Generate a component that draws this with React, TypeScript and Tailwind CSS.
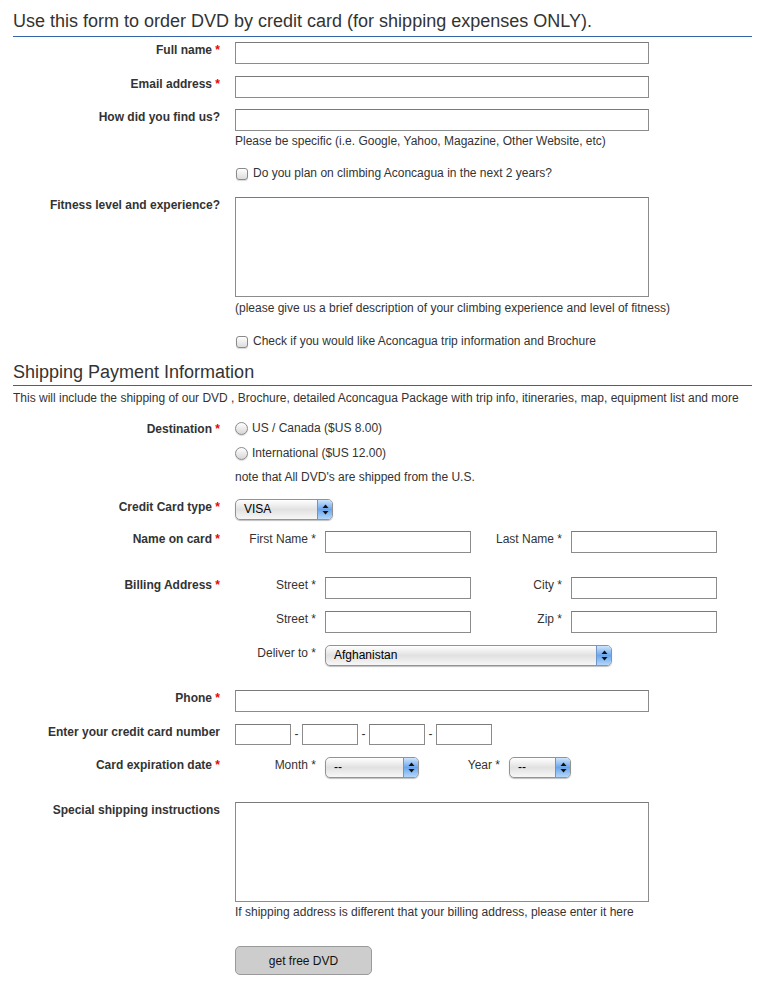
import React from "react";

const font = { fontFamily: '"Liberation Sans", Arial, Helvetica, sans-serif' };

function Req() {
  return <span className="text-[#e00] font-bold"> *</span>;
}

function Row({
  label,
  req,
  className,
  children,
}: {
  label: string;
  req?: boolean;
  className?: string;
  children?: React.ReactNode;
}) {
  return (
    <div className={"flex " + (className ?? "")}>
      <div className="w-[207px] shrink-0 text-right font-bold leading-[15px] pt-[1px] text-[#333]">
        {label}
        {req && <Req />}
      </div>
      <div className="ml-[15px] flex-1">{children}</div>
    </div>
  );
}

function TextInput({ className }: { className: string }) {
  return <div className={"border border-[#8c8c8c] border-t-[#7a7a7a] bg-white " + className} />;
}

function Arrows() {
  return (
    <svg width="7" height="11" viewBox="0 0 7 11">
      <path d="M3.5 0.5 L6.5 4 L0.5 4 Z" fill="#111" />
      <path d="M3.5 10.5 L6.5 7 L0.5 7 Z" fill="#111" />
    </svg>
  );
}

function AquaSelect({ value, className }: { value: string; className: string }) {
  return (
    <div
      className={
        "flex rounded-[5px] border border-[#939393] overflow-hidden shadow-[0_1px_1px_rgba(0,0,0,0.25)] bg-linear-to-b from-white via-[#e1e1e1] to-[#f7f7f7] " +
        className
      }
    >
      <span className="flex-1 pl-[8px] text-[12px] leading-[19px] text-black">{value}</span>
      <span className="w-[15px] flex items-center justify-center border-l border-[#6f94c9] bg-linear-to-b from-[#cfe5fb] via-[#6aa6ec] to-[#b3d6fa]">
        <Arrows />
      </span>
    </div>
  );
}

function Checkbox() {
  return (
    <span className="inline-block w-[12px] h-[12px] rounded-[3px] border border-[#8a8a8a] bg-linear-to-b from-white to-[#dcdcdc] shadow-[0_1px_1px_rgba(0,0,0,0.15)] mr-[5px] ml-[1px] shrink-0" />
  );
}

function Radio() {
  return (
    <span className="inline-block w-[13px] h-[13px] rounded-full border border-[#8a8a8a] bg-linear-to-b from-white to-[#d6d6d6] shadow-[0_1px_1px_rgba(0,0,0,0.15)] mr-[4px] shrink-0" />
  );
}

function SubLabel({ text, className }: { text: string; className: string }) {
  return <div className={"shrink-0 text-right leading-[15px] text-[#333] " + className}>{text} *</div>;
}

export default function App() {
  return (
    <div className="w-[765px] min-h-[995px] bg-white px-[13px] text-[12px] text-[#333]" style={font}>
      <h1 className="pt-[9px] pb-[3px] text-[18px] leading-[24px] font-normal text-[#333] border-b border-[#3564a8]">
        Use this form to order DVD by credit card (for shipping expenses ONLY).
      </h1>

      <Row label="Full name" req className="mt-[5px]">
        <TextInput className="w-[414px] h-[22px]" />
      </Row>
      <Row label="Email address" req className="mt-[12px]">
        <TextInput className="w-[414px] h-[22px]" />
      </Row>
      <Row label="How did you find us?" className="mt-[11px]">
        <TextInput className="w-[414px] h-[22px]" />
        <div className="mt-[3px] leading-[15px]">
          Please be specific (i.e. Google, Yahoo, Magazine, Other Website, etc)
        </div>
        <div className="mt-[17px] flex items-center leading-[15px]">
          <Checkbox />
          <span>Do you plan on climbing Aconcagua in the next 2 years?</span>
        </div>
      </Row>
      <Row label="Fitness level and experience?" className="mt-[16px]">
        <TextInput className="w-[414px] h-[100px]" />
        <div className="mt-[4px] leading-[15px]">
          (please give us a brief description of your climbing experience and level of fitness)
        </div>
        <div className="mt-[18px] flex items-center leading-[15px]">
          <Checkbox />
          <span>Check if you would like Aconcagua trip information and Brochure</span>
        </div>
      </Row>

      <h2 className="mt-[12px] pb-[2px] text-[18px] leading-[22px] font-normal text-[#333] border-b border-[#3564a8]">
        Shipping Payment Information
      </h2>
      <div className="mt-[5px] leading-[15px]">
        This will include the shipping of our DVD , Brochure, detailed Aconcagua Package with trip info,
        itineraries, map, equipment list and more
      </div>

      <Row label="Destination" req className="mt-[15px]">
        <div className="flex items-center leading-[15px]">
          <Radio />
          <span>US / Canada ($US 8.00)</span>
        </div>
        <div className="mt-[10px] flex items-center leading-[15px]">
          <Radio />
          <span>International ($US 12.00)</span>
        </div>
        <div className="mt-[9px] leading-[15px]">note that All DVD's are shipped from the U.S.</div>
      </Row>

      <Row label="Credit Card type" req className="mt-[14px]">
        <AquaSelect value="VISA" className="w-[98px] h-[21px]" />
      </Row>

      <Row label="Name on card" req className="mt-[11px]">
        <div className="flex">
          <SubLabel text="First Name" className="w-[81px] pt-[1px]" />
          <TextInput className="ml-[9px] w-[146px] h-[22px]" />
          <SubLabel text="Last Name" className="w-[91px] pt-[1px]" />
          <TextInput className="ml-[9px] w-[146px] h-[22px]" />
        </div>
      </Row>

      <Row label="Billing Address" req className="mt-[24px]">
        <div className="flex">
          <SubLabel text="Street" className="w-[81px] pt-[1px]" />
          <TextInput className="ml-[9px] w-[146px] h-[22px]" />
          <SubLabel text="City" className="w-[91px] pt-[1px]" />
          <TextInput className="ml-[9px] w-[146px] h-[22px]" />
        </div>
        <div className="mt-[12px] flex">
          <SubLabel text="Street" className="w-[81px] pt-[1px]" />
          <TextInput className="ml-[9px] w-[146px] h-[22px]" />
          <SubLabel text="Zip" className="w-[91px] pt-[1px]" />
          <TextInput className="ml-[9px] w-[146px] h-[22px]" />
        </div>
        <div className="mt-[12px] flex">
          <SubLabel text="Deliver to" className="w-[81px] pt-[1px]" />
          <AquaSelect value="Afghanistan" className="ml-[9px] w-[287px] h-[21px]" />
        </div>
      </Row>

      <Row label="Phone" req className="mt-[24px]">
        <TextInput className="w-[414px] h-[22px]" />
      </Row>

      <Row label="Enter your credit card number" className="mt-[12px]">
        <div className="flex items-center">
          <TextInput className="w-[56px] h-[21px]" />
          <span className="w-[11px] text-center leading-[15px]">-</span>
          <TextInput className="w-[56px] h-[21px]" />
          <span className="w-[11px] text-center leading-[15px]">-</span>
          <TextInput className="w-[56px] h-[21px]" />
          <span className="w-[11px] text-center leading-[15px]">-</span>
          <TextInput className="w-[56px] h-[21px]" />
        </div>
      </Row>

      <Row label="Card expiration date" req className="mt-[12px]">
        <div className="flex">
          <SubLabel text="Month" className="w-[81px] pt-[1px]" />
          <AquaSelect value="--" className="ml-[9px] w-[94px] h-[21px]" />
          <SubLabel text="Year" className="w-[81px] pt-[1px]" />
          <AquaSelect value="--" className="ml-[9px] w-[62px] h-[21px]" />
        </div>
      </Row>

      <Row label="Special shipping instructions" className="mt-[24px]">
        <TextInput className="w-[414px] h-[100px]" />
        <div className="mt-[3px] leading-[15px]">
          If shipping address is different that your billing address, please enter it here
        </div>
        <div className="mt-[26px] w-[137px] h-[29px] rounded-[5px] border border-[#9a9a9a] bg-[#cdcdcd] flex items-center justify-center text-[12px] text-[#111]">
          get free DVD
        </div>
      </Row>
    </div>
  );
}
